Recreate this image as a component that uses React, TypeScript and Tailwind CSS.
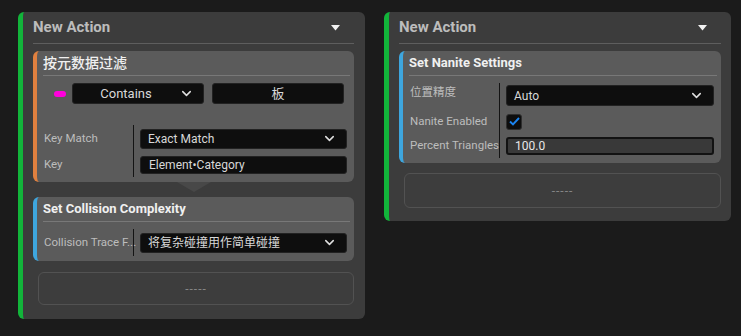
import { ChevronDown } from "lucide-react";

const font = {
  fontFamily: 'Roboto, "Noto Sans CJK SC", "Noto Sans", sans-serif',
};

const Caret = () => (
  <svg width="9" height="6" viewBox="0 0 9 6" className="mr-[14px]">
    <path d="M0 0 H9 L4.5 5.5 Z" fill="#f2f2f2" />
  </svg>
);

const Dropdown = ({ text, center, className }: { text: string; center?: boolean; className: string }) => (
  <div
    className={`flex items-center rounded-[3px] border border-[#222] bg-[#0e0e0e] pr-[9px] text-[#d8d8d8] ${className}`}
  >
    <span className={`flex-1 truncate ${center ? "text-center text-[13px]" : "pl-[7px] text-[12px]"}`}>{text}</span>
    <ChevronDown size={15} strokeWidth={2.4} color="#e0e0e0" />
  </div>
);

const InnerCard = ({
  title,
  stripe,
  thin,
  children,
}: {
  title: string;
  stripe: string;
  thin?: boolean;
  children: React.ReactNode;
}) => (
  <div className={`rounded-md border-l-4 bg-[#5b5b5b] pl-[6px] pr-[4px] ${stripe}`}>
    <div
      className={`flex h-[24px] items-center text-[#f0f0f0] ${thin ? "text-[14px] font-medium" : "text-[13px] font-bold"}`}
    >
      {title}
    </div>
    <div className="h-px bg-[#787878]" />
    {children}
  </div>
);

const Row = ({
  label,
  h,
  top,
  children,
}: {
  label: string;
  h: string;
  top?: boolean;
  children: React.ReactNode;
}) => (
  <div className={`flex ${h}`}>
    <div
      className={`flex w-[91px] shrink-0 border-r border-[#141414] pl-[1px] text-[11.5px] text-[#bdbdbd] ${
        top ? "items-start pt-[1px]" : "items-center"
      }`}
    >
      <span className="whitespace-nowrap">{label}</span>
    </div>
    <div className={`flex flex-1 pl-[6px] pr-[3px] ${top ? "items-start pt-[2px]" : "items-center"}`}>{children}</div>
  </div>
);

const Header = () => (
  <>
    <div className="flex h-[31px] items-center justify-between">
      <span className="text-[15px] font-bold text-[#bcbcbc]">New Action</span>
      <Caret />
    </div>
    <div className="h-px bg-[#5e5e5e]" />
  </>
);

const EmptySlot = ({ className }: { className: string }) => (
  <div
    className={`ml-[5px] flex items-center justify-center rounded-md border border-[#525252] bg-[#3d3d3d] text-[12px] tracking-[1px] text-[#858585] ${className}`}
  >
    -----
  </div>
);

export default function App() {
  return (
    <div className="flex min-h-[336px] items-start gap-[19px] bg-[#1b1b1b] pl-[18px] pt-[12px]" style={font}>
      {/* left action */}
      <div className="w-[347px] rounded-md border-l-[5px] border-[#12b43a] bg-[#3c3c3c] pb-[14px] pl-[10px] pr-[11px]">
        <Header />
        <div className="mt-[7px]">
          <InnerCard title="按元数据过滤" stripe="border-[#e0803f]" thin>
            <div className="mt-[7px] flex h-[21px] items-center">
              <div className="ml-[11px] h-[6px] w-[12px] rounded-full bg-[#ff00dc]" />
              <Dropdown text="Contains" center className="ml-[6px] h-[21px] w-[132px]" />
              <div className="ml-[8px] flex h-[21px] w-[132px] items-center justify-center rounded-[3px] border border-[#222] bg-[#0e0e0e] text-[13px] text-[#d8d8d8]">
                板
              </div>
            </div>
            <div className="mt-[21px] pb-[5px]">
              <Row label="Key Match" h="h-[27px]">
                <Dropdown text="Exact Match" className="h-[20px] w-full" />
              </Row>
              <Row label="Key" h="h-[25px]">
                <div className="flex h-[18px] w-full items-center rounded-[3px] border border-[#222] bg-[#0e0e0e] pl-[8px] text-[12px] text-[#d8d8d8]">
                  Element•Category
                </div>
              </Row>
            </div>
          </InnerCard>
        </div>
        <div className="flex h-[15px] justify-center">
          <svg width="34" height="10" viewBox="0 0 34 10">
            <path d="M0 0 H34 L17 10 Z" fill="#484848" />
          </svg>
        </div>
        <InnerCard title="Set Collision Complexity" stripe="border-[#3ea6de]">
          <div className="mt-[7px] pb-[5px]">
            <Row label="Collision Trace F..." h="h-[27px]">
              <Dropdown text="将复杂碰撞用作简单碰撞" className="h-[20px] w-full" />
            </Row>
          </div>
        </InnerCard>
        <EmptySlot className="mt-[11px] h-[33px]" />
      </div>

      {/* right action */}
      <div className="w-[347px] rounded-md border-l-[5px] border-[#12b43a] bg-[#3c3c3c] pb-[13px] pl-[10px] pr-[10px]">
        <Header />
        <div className="mt-[7px]">
          <InnerCard title="Set Nanite Settings" stripe="border-[#3ea6de]">
            <div className="mt-[7px] pb-[5px]">
              <Row label="位置精度" h="h-[27px]" top>
                <Dropdown text="Auto" className="h-[21px] w-full" />
              </Row>
              <Row label="Nanite Enabled" h="h-[23px]">
                <div className="flex h-[16px] w-[16px] items-center justify-center rounded-[3px] border border-[#2e2e2e] bg-[#0e0e0e]">
                  <svg width="11" height="9" viewBox="0 0 11 9">
                    <path d="M1 4.5 L4 7.5 L10 1" fill="none" stroke="#1b84f0" strokeWidth="1.9" />
                  </svg>
                </div>
              </Row>
              <Row label="Percent Triangles" h="h-[25px]">
                <div className="flex h-[18px] w-full items-center rounded-[3px] border-2 border-[#121212] bg-[#393939] pl-[7px] text-[12px] text-[#e8e8e8]">
                  100.0
                </div>
              </Row>
            </div>
          </InnerCard>
        </div>
        <EmptySlot className="mt-[10px] h-[35px]" />
      </div>
    </div>
  );
}
